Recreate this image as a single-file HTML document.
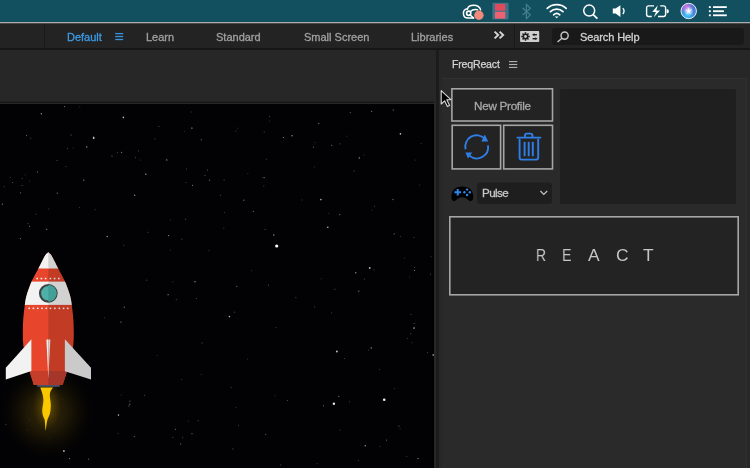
<!DOCTYPE html>
<html><head><meta charset="utf-8">
<style>
*{margin:0;padding:0;box-sizing:border-box}
html,body{width:750px;height:468px;overflow:hidden;background:#262626;font-family:"Liberation Sans",sans-serif}
.a{position:absolute}
.t{position:absolute;white-space:nowrap;line-height:1;-webkit-text-stroke:0.3px currentColor;will-change:transform}
</style></head><body>
<!-- menubar -->
<div class="a" style="left:0;top:0;width:750px;height:22px;background:#13505f"></div>
<div class="a" style="left:0;top:22px;width:750px;height:1px;background:#ababab"></div>
<div class="a" style="left:0;top:23px;width:750px;height:1px;background:#4a4a4a"></div>
<!-- toolbar -->
<div class="a" style="left:0;top:24px;width:750px;height:24px;background:#232323"></div>
<div class="a" style="left:0;top:48px;width:750px;height:2px;background:#161616"></div>
<div class="a" style="left:44px;top:24px;width:1px;height:24px;background:#191919"></div>
<div class="a" style="left:514px;top:24px;width:1px;height:24px;background:#191919"></div>

<div class="t" style="left:67px;top:31.7px;font-size:11px;color:#3d9be6">Default</div>
<div class="t" style="left:146px;top:31.7px;font-size:11px;color:#a0a0a0">Learn</div>
<div class="t" style="left:216px;top:31.7px;font-size:11px;color:#a0a0a0">Standard</div>
<div class="t" style="left:304px;top:31.7px;font-size:11px;color:#a0a0a0">Small Screen</div>
<div class="t" style="left:411px;top:31.7px;font-size:11px;color:#a0a0a0">Libraries</div>
<div class="a" style="left:552px;top:28px;width:192px;height:16.5px;background:#191919;border-radius:3px"></div>
<div class="t" style="left:579.5px;top:31.7px;font-size:11px;color:#d2d2d2;letter-spacing:-0.1px">Search Help</div>

<!-- left comp panel -->
<div class="a" style="left:0;top:50px;width:435px;height:51px;background:#272727"></div>
<div class="a" style="left:0;top:101px;width:435px;height:1px;background:#1f1f1f"></div>
<div class="a" style="left:0;top:102px;width:435px;height:1px;background:#171717"></div>
<div class="a" style="left:0;top:103px;width:435px;height:1px;background:#282828"></div>
<div class="a" style="left:0;top:104px;width:434px;height:364px;background:#020204"></div>
<svg class="a" style="left:0;top:104px" width="434" height="364" viewBox="0 104 434 364">
<defs>
<clipPath id="body"><path d="M48.3,252.5 C48.78,252.92 50.10,253.42 51.20,255.00 C52.30,256.58 53.73,259.75 54.90,262.00 C56.07,264.25 56.55,265.33 58.20,268.50 C59.85,271.67 62.85,276.58 64.80,281.00 C66.75,285.42 68.73,291.00 69.90,295.00 C71.07,299.00 71.22,300.83 71.80,305.00 C72.38,309.17 73.07,315.00 73.40,320.00 C73.73,325.00 73.82,330.83 73.80,335.00 C73.78,339.17 73.68,341.67 73.30,345.00 C72.92,348.33 72.53,350.67 71.50,355.00 C70.47,359.33 68.57,366.00 67.10,371.00 C65.63,376.00 63.43,382.67 62.70,385.00 L33.90,385.00 C33.17,382.67 30.97,376.00 29.50,371.00 C28.03,366.00 26.13,359.33 25.10,355.00 C24.07,350.67 23.68,348.33 23.30,345.00 C22.92,341.67 22.82,339.17 22.80,335.00 C22.78,330.83 22.87,325.00 23.20,320.00 C23.53,315.00 24.22,309.17 24.80,305.00 C25.38,300.83 25.53,299.00 26.70,295.00 C27.87,291.00 29.85,285.42 31.80,281.00 C33.75,276.58 36.75,271.67 38.40,268.50 C40.05,265.33 40.53,264.25 41.70,262.00 C42.87,259.75 44.30,256.58 45.40,255.00 C46.50,253.42 47.82,252.92 48.30,252.50 Z"/></clipPath>
<radialGradient id="glow" cx="50%" cy="50%" r="50%">
<stop offset="0" stop-color="#3a2e08" stop-opacity="1"/><stop offset="0.45" stop-color="#251d06" stop-opacity="0.8"/><stop offset="1" stop-color="#100c02" stop-opacity="0"/>
</radialGradient>
<radialGradient id="glow2" cx="50%" cy="50%" r="50%">
<stop offset="0" stop-color="#8a6a00" stop-opacity="0.7"/><stop offset="1" stop-color="#5a4400" stop-opacity="0"/>
</radialGradient>
</defs>
<g id="stars"><rect x="140.2" y="159.6" width="1" height="1" fill="rgb(48,48,52)"/><rect x="158.3" y="126.0" width="1" height="1" fill="rgb(77,77,81)"/><rect x="93.0" y="136.1" width="1" height="1" fill="rgb(71,71,75)"/><rect x="30.2" y="137.8" width="1" height="1" fill="rgb(72,72,76)"/><rect x="410.2" y="333.3" width="1" height="1" fill="rgb(82,82,86)"/><rect x="410.4" y="313.9" width="1" height="1" fill="rgb(70,70,74)"/><rect x="21.5" y="185.0" width="1" height="1" fill="rgb(80,80,84)"/><rect x="371.7" y="209.8" width="1" height="1" fill="rgb(54,54,58)"/><rect x="234.1" y="311.7" width="1" height="1" fill="rgb(80,80,84)"/><rect x="353.4" y="170.4" width="1" height="1" fill="rgb(82,82,86)"/><rect x="247.3" y="173.0" width="1" height="1" fill="rgb(51,51,55)"/><rect x="237.2" y="127.7" width="1" height="1" fill="rgb(48,48,52)"/><rect x="268.0" y="284.7" width="1" height="1" fill="rgb(79,79,83)"/><rect x="185.1" y="218.7" width="1" height="1" fill="rgb(82,82,86)"/><rect x="399.9" y="235.9" width="1" height="1" fill="rgb(60,60,64)"/><rect x="344.0" y="358.0" width="1" height="1" fill="rgb(60,60,64)"/><rect x="35.4" y="213.7" width="1" height="1" fill="rgb(76,76,80)"/><rect x="378.9" y="369.1" width="1" height="1" fill="rgb(63,63,67)"/><rect x="263.7" y="131.5" width="1" height="1" fill="rgb(77,77,81)"/><rect x="181.0" y="379.1" width="1" height="1" fill="rgb(54,54,58)"/><rect x="404.1" y="257.7" width="1" height="1" fill="rgb(49,49,53)"/><rect x="331.1" y="312.4" width="1" height="1" fill="rgb(65,65,69)"/><rect x="147.3" y="231.8" width="1" height="1" fill="rgb(76,76,80)"/><rect x="251.1" y="270.1" width="1" height="1" fill="rgb(50,50,54)"/><rect x="409.0" y="276.6" width="1" height="1" fill="rgb(49,49,53)"/><rect x="280.2" y="464.5" width="1" height="1" fill="rgb(73,73,77)"/><rect x="123.2" y="244.7" width="1" height="1" fill="rgb(67,67,71)"/><rect x="72.8" y="147.4" width="1" height="1" fill="rgb(48,48,52)"/><rect x="94.5" y="209.1" width="1" height="1" fill="rgb(60,60,64)"/><rect x="172.3" y="436.9" width="1" height="1" fill="rgb(76,76,80)"/><rect x="237.9" y="424.8" width="1" height="1" fill="rgb(72,72,76)"/><rect x="374.1" y="205.8" width="1" height="1" fill="rgb(71,71,75)"/><rect x="427.1" y="352.1" width="1" height="1" fill="rgb(69,69,73)"/><rect x="414.7" y="159.6" width="1" height="1" fill="rgb(56,56,60)"/><rect x="79.0" y="207.1" width="1" height="1" fill="rgb(54,54,58)"/><rect x="181.4" y="238.7" width="1" height="1" fill="rgb(81,81,85)"/><rect x="138.0" y="150.4" width="1" height="1" fill="rgb(77,77,81)"/><rect x="411.4" y="342.1" width="1" height="1" fill="rgb(48,48,52)"/><rect x="197.7" y="420.3" width="1" height="1" fill="rgb(80,80,84)"/><rect x="169.9" y="249.4" width="1" height="1" fill="rgb(51,51,55)"/><rect x="208.5" y="250.0" width="1" height="1" fill="rgb(57,57,61)"/><rect x="29.2" y="180.6" width="1" height="1" fill="rgb(55,55,59)"/><rect x="232.4" y="448.5" width="1" height="1" fill="rgb(84,84,88)"/><rect x="265.9" y="158.8" width="1" height="1" fill="rgb(61,61,65)"/><rect x="413.7" y="323.0" width="1" height="1" fill="rgb(75,75,79)"/><rect x="430.0" y="273.7" width="1" height="1" fill="rgb(75,75,79)"/><rect x="135.0" y="157.2" width="1" height="1" fill="rgb(66,66,70)"/><rect x="320.6" y="278.3" width="1" height="1" fill="rgb(55,55,59)"/><rect x="223.6" y="179.3" width="1" height="1" fill="rgb(78,78,82)"/><rect x="156.6" y="354.8" width="1" height="1" fill="rgb(46,46,50)"/><rect x="328.3" y="212.9" width="1" height="1" fill="rgb(50,50,54)"/><rect x="301.5" y="199.5" width="1" height="1" fill="rgb(68,68,72)"/><rect x="393.3" y="233.8" width="1" height="1" fill="rgb(59,59,63)"/><rect x="230.6" y="387.0" width="1" height="1" fill="rgb(66,66,70)"/><rect x="275.6" y="327.0" width="1" height="1" fill="rgb(57,57,61)"/><rect x="349.0" y="401.2" width="1" height="1" fill="rgb(59,59,63)"/><rect x="316.5" y="463.2" width="1" height="1" fill="rgb(62,62,66)"/><rect x="204.5" y="175.1" width="1" height="1" fill="rgb(83,83,87)"/><rect x="414.2" y="266.9" width="1" height="1" fill="rgb(67,67,71)"/><rect x="413.5" y="237.0" width="1" height="1" fill="rgb(59,59,63)"/><rect x="146.2" y="279.7" width="1" height="1" fill="rgb(84,84,88)"/><rect x="363.9" y="278.6" width="1" height="1" fill="rgb(67,67,71)"/><rect x="346.2" y="135.7" width="1" height="1" fill="rgb(52,52,56)"/><rect x="393.9" y="388.2" width="1" height="1" fill="rgb(57,57,61)"/><rect x="207.0" y="169.6" width="1" height="1" fill="rgb(85,85,89)"/><rect x="144.0" y="394.9" width="1" height="1" fill="rgb(70,70,74)"/><rect x="200.5" y="374.1" width="1" height="1" fill="rgb(50,50,54)"/><rect x="313.8" y="166.5" width="1" height="1" fill="rgb(53,53,57)"/><rect x="201.5" y="342.4" width="1" height="1" fill="rgb(84,84,88)"/><rect x="357.9" y="459.9" width="1" height="1" fill="rgb(67,67,71)"/><rect x="314.5" y="142.2" width="1" height="1" fill="rgb(53,53,57)"/><rect x="187.8" y="420.6" width="1" height="1" fill="rgb(58,58,62)"/><rect x="12.1" y="182.0" width="1" height="1" fill="rgb(77,77,81)"/><rect x="104.2" y="317.3" width="1" height="1" fill="rgb(61,61,65)"/><rect x="235.7" y="407.0" width="1" height="1" fill="rgb(48,48,52)"/><rect x="394.0" y="233.1" width="1" height="1" fill="rgb(74,74,78)"/><rect x="286.9" y="400.0" width="1" height="1" fill="rgb(78,78,82)"/><rect x="182.1" y="437.2" width="1" height="1" fill="rgb(77,77,81)"/><rect x="56.6" y="160.0" width="1" height="1" fill="rgb(77,77,81)"/><rect x="79.3" y="106.4" width="1" height="1" fill="rgb(54,54,58)"/><rect x="314.0" y="306.4" width="1" height="1" fill="rgb(65,65,69)"/><rect x="295.4" y="297.1" width="1" height="1" fill="rgb(75,75,79)"/><rect x="339.6" y="143.4" width="1" height="1" fill="rgb(80,80,84)"/><rect x="24.6" y="174.3" width="1" height="1" fill="rgb(47,47,51)"/><rect x="334.4" y="288.8" width="1" height="1" fill="rgb(80,80,84)"/><rect x="27.4" y="222.9" width="1" height="1" fill="rgb(77,77,81)"/><rect x="262.5" y="177.2" width="1" height="1" fill="rgb(62,62,66)"/><rect x="195.9" y="298.0" width="1" height="1" fill="rgb(75,75,79)"/><rect x="219.9" y="194.7" width="1" height="1" fill="rgb(78,78,82)"/><rect x="379.5" y="446.1" width="1" height="1" fill="rgb(61,61,65)"/><rect x="399.6" y="428.2" width="1" height="1" fill="rgb(57,57,61)"/><rect x="363.7" y="154.6" width="1" height="1" fill="rgb(52,52,56)"/><rect x="169.9" y="219.4" width="1" height="1" fill="rgb(60,60,64)"/><rect x="185.5" y="182.0" width="1" height="1" fill="rgb(64,64,68)"/><rect x="339.4" y="429.7" width="1" height="1" fill="rgb(54,54,58)"/><rect x="406.8" y="337.9" width="1" height="1" fill="rgb(68,68,72)"/><rect x="418.9" y="184.5" width="1" height="1" fill="rgb(51,51,55)"/><rect x="172.4" y="281.4" width="1" height="1" fill="rgb(59,59,63)"/><rect x="223.3" y="227.8" width="1" height="1" fill="rgb(57,57,61)"/><rect x="154.4" y="138.4" width="1" height="1" fill="rgb(68,68,72)"/><rect x="190.7" y="111.5" width="1" height="1" fill="rgb(66,66,70)"/><rect x="224.0" y="212.0" width="1" height="1" fill="rgb(49,49,53)"/><rect x="48.9" y="437.5" width="1" height="1" fill="rgb(59,59,63)"/><rect x="420.7" y="142.9" width="1" height="1" fill="rgb(61,61,65)"/><rect x="117.7" y="432.9" width="1" height="1" fill="rgb(56,56,60)"/><rect x="117.1" y="151.9" width="1" height="1" fill="rgb(72,72,76)"/><rect x="367.9" y="349.7" width="1" height="1" fill="rgb(61,61,65)"/><rect x="175.8" y="299.2" width="1" height="1" fill="rgb(77,77,81)"/><rect x="247.1" y="358.6" width="1" height="1" fill="rgb(50,50,54)"/><rect x="120.8" y="394.5" width="1" height="1" fill="rgb(56,56,60)"/><rect x="184.2" y="131.2" width="1" height="1" fill="rgb(46,46,50)"/><rect x="274.7" y="395.2" width="1" height="1" fill="rgb(50,50,54)"/><rect x="263.3" y="185.5" width="1" height="1" fill="rgb(61,61,65)"/><rect x="373.6" y="269.3" width="1" height="1" fill="rgb(66,66,70)"/><rect x="430.5" y="256.2" width="1" height="1" fill="rgb(62,62,66)"/><rect x="269.2" y="120.6" width="1" height="1" fill="rgb(60,60,64)"/><rect x="406.2" y="455.9" width="1" height="1" fill="rgb(61,61,65)"/><rect x="21.8" y="178.0" width="1" height="1" fill="rgb(64,64,68)"/><circle cx="41.3" cy="113.8" r="0.7" fill="rgb(150,150,150)"/><circle cx="64.4" cy="106.6" r="0.6" fill="rgb(120,120,120)"/><circle cx="123.4" cy="117.4" r="0.8" fill="rgb(190,190,190)"/><circle cx="93.7" cy="138" r="0.9" fill="rgb(220,220,220)"/><circle cx="86.8" cy="147" r="0.7" fill="rgb(150,150,150)"/><circle cx="71" cy="135" r="0.6" fill="rgb(110,110,110)"/><circle cx="26.6" cy="135.6" r="0.6" fill="rgb(110,110,110)"/><circle cx="191.9" cy="128.1" r="0.7" fill="rgb(170,170,170)"/><circle cx="201.2" cy="139.8" r="0.6" fill="rgb(120,120,120)"/><circle cx="112" cy="156" r="0.6" fill="rgb(130,130,130)"/><circle cx="121.6" cy="152.4" r="0.6" fill="rgb(120,120,120)"/><circle cx="166.8" cy="159.9" r="0.7" fill="rgb(150,150,150)"/><circle cx="145.8" cy="174.3" r="0.7" fill="rgb(160,160,160)"/><circle cx="83.8" cy="180.2" r="0.6" fill="rgb(140,140,140)"/><circle cx="37.4" cy="171.9" r="0.6" fill="rgb(110,110,110)"/><circle cx="134.7" cy="195.2" r="0.7" fill="rgb(150,150,150)"/><circle cx="57.2" cy="193.1" r="0.6" fill="rgb(140,140,140)"/><circle cx="192.5" cy="185.3" r="0.6" fill="rgb(130,130,130)"/><circle cx="209.6" cy="180.2" r="0.6" fill="rgb(110,110,110)"/><circle cx="2.4" cy="204.2" r="0.6" fill="rgb(120,120,120)"/><circle cx="20.4" cy="192.8" r="0.6" fill="rgb(110,110,110)"/><circle cx="46.7" cy="229.3" r="0.6" fill="rgb(140,140,140)"/><circle cx="29.6" cy="226.3" r="0.6" fill="rgb(110,110,110)"/><circle cx="107.2" cy="236.5" r="0.7" fill="rgb(160,160,160)"/><circle cx="168.6" cy="235.6" r="0.6" fill="rgb(140,140,140)"/><circle cx="20.4" cy="238.6" r="0.6" fill="rgb(120,120,120)"/><circle cx="65.9" cy="166.5" r="0.5" fill="rgb(90,90,90)"/><circle cx="67.4" cy="148.5" r="0.5" fill="rgb(90,90,90)"/><circle cx="186.5" cy="168.9" r="0.5" fill="rgb(90,90,90)"/><circle cx="48.8" cy="209" r="0.5" fill="rgb(90,90,90)"/><circle cx="4.2" cy="186.8" r="0.5" fill="rgb(90,90,90)"/><circle cx="10.2" cy="177.2" r="0.5" fill="rgb(80,80,80)"/><circle cx="400.4" cy="133.9" r="0.8" fill="rgb(200,200,200)"/><circle cx="359.3" cy="157.9" r="0.7" fill="rgb(160,160,160)"/><circle cx="320.9" cy="199.6" r="0.8" fill="rgb(180,180,180)"/><circle cx="327.8" cy="227.2" r="0.8" fill="rgb(180,180,180)"/><circle cx="339.8" cy="214.6" r="0.6" fill="rgb(130,130,130)"/><circle cx="273.8" cy="235" r="0.7" fill="rgb(150,150,150)"/><circle cx="283.4" cy="137.5" r="0.6" fill="rgb(140,140,140)"/><circle cx="292.1" cy="135.7" r="0.7" fill="rgb(150,150,150)"/><circle cx="318.8" cy="123.4" r="0.6" fill="rgb(120,120,120)"/><circle cx="264.2" cy="177.7" r="0.6" fill="rgb(120,120,120)"/><circle cx="243.8" cy="200.2" r="0.6" fill="rgb(130,130,130)"/><circle cx="253.4" cy="211.3" r="0.6" fill="rgb(110,110,110)"/><circle cx="392.9" cy="199.6" r="0.6" fill="rgb(130,130,130)"/><circle cx="331.7" cy="145.3" r="0.6" fill="rgb(110,110,110)"/><circle cx="313.4" cy="147.1" r="0.6" fill="rgb(110,110,110)"/><circle cx="393.2" cy="109.9" r="0.6" fill="rgb(110,110,110)"/><circle cx="371.6" cy="111.4" r="0.6" fill="rgb(110,110,110)"/><circle cx="350.3" cy="112.6" r="0.6" fill="rgb(100,100,100)"/><circle cx="269.6" cy="116.5" r="0.5" fill="rgb(90,90,90)"/><circle cx="236" cy="130.9" r="0.5" fill="rgb(90,90,90)"/><circle cx="265.1" cy="229.6" r="0.5" fill="rgb(100,100,100)"/><circle cx="276.7" cy="246" r="1.6" fill="rgb(255,255,255)"/><circle cx="384.2" cy="399.8" r="1.3" fill="rgb(240,240,240)"/><circle cx="333.9" cy="403.7" r="1.2" fill="rgb(230,230,230)"/><circle cx="336.9" cy="351.5" r="0.9" fill="rgb(200,200,200)"/><circle cx="369.7" cy="267.9" r="0.9" fill="rgb(190,190,190)"/><circle cx="355.8" cy="272.8" r="0.7" fill="rgb(150,150,150)"/><circle cx="229.4" cy="316.6" r="0.8" fill="rgb(180,180,180)"/><circle cx="414" cy="328.1" r="0.8" fill="rgb(170,170,170)"/><circle cx="371.2" cy="348" r="0.7" fill="rgb(150,150,150)"/><circle cx="195" cy="281.8" r="0.7" fill="rgb(150,150,150)"/><circle cx="168.1" cy="294.7" r="0.6" fill="rgb(140,140,140)"/><circle cx="120.9" cy="322.1" r="0.6" fill="rgb(140,140,140)"/><circle cx="433.2" cy="355" r="0.8" fill="rgb(200,200,200)"/><circle cx="236.8" cy="286.3" r="0.6" fill="rgb(120,120,120)"/><circle cx="358.8" cy="291.2" r="0.6" fill="rgb(130,130,130)"/><circle cx="414.5" cy="270.3" r="0.6" fill="rgb(130,130,130)"/><circle cx="124.3" cy="307.2" r="0.6" fill="rgb(120,120,120)"/><circle cx="118.4" cy="414.7" r="0.6" fill="rgb(130,130,130)"/><circle cx="129.8" cy="404.2" r="0.6" fill="rgb(120,120,120)"/><circle cx="118.5" cy="415.2" r="0.7" fill="rgb(160,160,160)"/><circle cx="63.9" cy="451" r="0.9" fill="rgb(200,200,200)"/><circle cx="129.9" cy="401.1" r="0.6" fill="rgb(120,120,120)"/><circle cx="129" cy="405.8" r="0.6" fill="rgb(110,110,110)"/><circle cx="29.3" cy="420.2" r="0.6" fill="rgb(110,110,110)"/><circle cx="5.9" cy="424.6" r="0.5" fill="rgb(90,90,90)"/><circle cx="69.5" cy="458.6" r="0.6" fill="rgb(130,130,130)"/><circle cx="134.3" cy="436.6" r="0.6" fill="rgb(110,110,110)"/><circle cx="175.4" cy="429.3" r="0.6" fill="rgb(110,110,110)"/><circle cx="180.6" cy="443.9" r="0.6" fill="rgb(100,100,100)"/><circle cx="192" cy="433.7" r="0.6" fill="rgb(110,110,110)"/><circle cx="88.6" cy="459.2" r="0.6" fill="rgb(100,100,100)"/><circle cx="27" cy="429.9" r="0.5" fill="rgb(90,90,90)"/><circle cx="61.9" cy="398.8" r="0.6" fill="rgb(100,100,100)"/><circle cx="365.2" cy="445.7" r="0.7" fill="rgb(160,160,160)"/><circle cx="418" cy="458.6" r="0.7" fill="rgb(150,150,150)"/><circle cx="323.5" cy="405.8" r="0.6" fill="rgb(120,120,120)"/><circle cx="338.8" cy="396.4" r="0.6" fill="rgb(110,110,110)"/><circle cx="398.9" cy="426" r="0.6" fill="rgb(110,110,110)"/><circle cx="265.7" cy="434.3" r="0.6" fill="rgb(100,100,100)"/><circle cx="386.6" cy="440.1" r="0.6" fill="rgb(110,110,110)"/></g>
<ellipse cx="47" cy="412" rx="46" ry="46" fill="url(#glow)"/>
<ellipse cx="47" cy="405" rx="14" ry="26" fill="url(#glow2)"/>
<g clip-path="url(#body)">
<rect x="0" y="250" width="49" height="140" fill="#e8462c"/>
<rect x="48.3" y="250" width="50" height="140" fill="#c23b25"/>
<rect x="0" y="250" width="49" height="18.5" fill="#f2f2f2"/>
<rect x="48.3" y="250" width="50" height="18.5" fill="#d2d2d2"/>
<rect x="0" y="281.6" width="49" height="23.3" fill="#f2f2f2"/>
<rect x="48.3" y="281.6" width="50" height="23.3" fill="#d2d2d2"/>
<rect x="0" y="371" width="49" height="20" fill="#c43e2a"/>
<rect x="48.3" y="371" width="50" height="20" fill="#a6362a"/>
</g>
<g fill="#f4f4f4">
<rect x="36.4" y="277.8" width="1.6" height="1.5"/><rect x="40.6" y="277.8" width="1.6" height="1.5"/><rect x="44.8" y="277.8" width="1.6" height="1.5"/>
<rect x="49.6" y="277.8" width="1.6" height="1.5" fill="#dcdcdc"/><rect x="53.8" y="277.8" width="1.6" height="1.5" fill="#dcdcdc"/><rect x="58" y="277.8" width="1.6" height="1.5" fill="#dcdcdc"/>
</g>
<g fill="#f4f4f4">
<rect x="28.4" y="307.6" width="1.6" height="1.5"/><rect x="32.6" y="307.6" width="1.6" height="1.5"/><rect x="36.9" y="307.6" width="1.6" height="1.5"/><rect x="41.2" y="307.6" width="1.6" height="1.5"/><rect x="45.5" y="307.6" width="1.6" height="1.5"/>
</g>
<g fill="#dcdcdc">
<rect x="49.6" y="307.6" width="1.6" height="1.5"/><rect x="54" y="307.6" width="1.6" height="1.5"/><rect x="58.5" y="307.6" width="1.6" height="1.5"/><rect x="62.8" y="307.6" width="1.6" height="1.5"/><rect x="66.9" y="307.6" width="1.6" height="1.5"/>
</g>
<circle cx="48.3" cy="293.3" r="8.3" fill="#4db1a9" stroke="#3f4343" stroke-width="2.2"/>
<path d="M48.3,284.9 A8.3,8.3 0 0 1 48.3,301.7 Z" fill="#41a196"/>
<!-- wings -->
<polygon points="31.4,339.2 5.8,367.8 5.8,379.4 31.4,371" fill="#f2f2f2"/>
<polygon points="64.9,339.2 91,367.8 91,379.4 64.9,371.3" fill="#cacaca"/>
<polygon points="46.4,339.4 48.3,339.4 48.3,378.5" fill="#f2f2f2"/>
<polygon points="48.3,339.4 50.4,339.4 48.3,378.5" fill="#cfcfcf"/>
<!-- nozzle -->
<rect x="37.2" y="385" width="22.5" height="1.8" fill="#4a5366"/>
<!-- flame -->
<path d="M40.2,387.6 L53,387.6 C51.6,389.4 50,391.4 49.8,394.6 C49.6,398 50.8,401 50.8,405 C50.8,410 50.2,413.6 48.8,416.4 C47.4,419 46.8,422 46.4,425.4 L45.6,431 C45.2,427 45.2,423 44.6,419.6 C43.6,417.4 42.2,414.6 42.2,410.6 C42.2,406.6 43.6,403.6 43.4,399.4 C43.2,395.6 41.8,391.6 40.2,387.6 Z" fill="#fac800"/>
</svg>
<div class="a" style="left:434px;top:50px;width:2px;height:418px;background:#272727"></div>
<div class="a" style="left:436px;top:50px;width:3.5px;height:418px;background:#1c1c1c"></div>

<!-- right panel -->
<div class="a" style="left:439px;top:50px;width:311px;height:418px;background:#272727"></div>
<div class="a" style="left:442px;top:78px;width:305px;height:390px;background:#2a2a2a;border-top:1px solid #303030;border-right:1px solid #303030"></div>
<div class="t" style="left:452px;top:59.1px;font-size:10.6px;color:#d4d4d4;-webkit-text-stroke:0.25px currentColor;letter-spacing:-0.2px">FreqReact</div>

<!-- buttons -->
<svg class="a" style="left:0;top:0" width="750" height="468" viewBox="0 0 750 468">
<g fill="#232323" stroke="#a6a6a6" stroke-width="1.6">
<rect x="451.9" y="88.8" width="100.6" height="32.2"/>
<rect x="452.2" y="125.3" width="48.4" height="43.6"/>
<rect x="503.7" y="125.3" width="48.8" height="43.6"/>
<rect x="449.8" y="216.8" width="288.4" height="78"/>
</g>
<rect x="560" y="89" width="176" height="115" rx="2" fill="#1f1f1f"/>
<rect x="477" y="182.5" width="75" height="21.5" rx="3" fill="#1e1e1e"/>
</svg>
<div class="t" style="left:473.5px;top:100.4px;font-size:11.7px;color:#a8a8a8;letter-spacing:-0.28px">New Profile</div>
<div class="t" style="left:482.3px;top:187.4px;font-size:11.6px;color:#c8c8c8;letter-spacing:-0.55px">Pulse</div>
<div class="t" style="left:535.8px;top:246.6px;font-size:17.4px;color:#c6c6c6;-webkit-text-stroke:0;transform:scaleX(0.8);transform-origin:0 0">R</div>
<div class="t" style="left:562.4px;top:246.6px;font-size:17.4px;color:#c6c6c6;-webkit-text-stroke:0;transform:scaleX(0.82);transform-origin:0 0">E</div>
<div class="t" style="left:587.5px;top:246.6px;font-size:17.4px;color:#c6c6c6;-webkit-text-stroke:0">A</div>
<div class="t" style="left:616px;top:246.6px;font-size:17.4px;color:#c6c6c6;-webkit-text-stroke:0">C</div>
<div class="t" style="left:643px;top:246.6px;font-size:17.4px;color:#c6c6c6;-webkit-text-stroke:0">T</div>

<svg class="a" style="left:0;top:0" width="750" height="468" viewBox="0 0 750 468">
<!-- toolbar hamburger -->
<g stroke="#3a92e2" stroke-width="1.3">
<line x1="115.2" y1="33.6" x2="123.2" y2="33.6"/><line x1="115.2" y1="36.5" x2="123.2" y2="36.5"/><line x1="115.2" y1="39.5" x2="123.2" y2="39.5"/>
</g>
<!-- >> -->
<g fill="none" stroke="#d6d6d6" stroke-width="1.9" stroke-linejoin="miter">
<polyline points="494.6,31.6 498.2,35 494.6,38.4"/><polyline points="499.6,31.6 503.2,35 499.6,38.4"/>
</g>
<!-- workspace icon -->
<rect x="520.1" y="30.9" width="19.1" height="11.1" rx="0.8" fill="#cfcfcf"/>
<polygon points="524.73,33.60 524.77,32.26 526.23,32.26 526.27,33.60 527.00,33.90 527.98,32.99 529.01,34.02 528.10,35.00 528.40,35.73 529.74,35.77 529.74,37.23 528.40,37.27 528.10,38.00 529.01,38.98 527.98,40.01 527.00,39.10 526.27,39.40 526.23,40.74 524.77,40.74 524.73,39.40 524.00,39.10 523.02,40.01 521.99,38.98 522.90,38.00 522.60,37.27 521.26,37.23 521.26,35.77 522.60,35.73 522.90,35.00 521.99,34.02 523.02,32.99 524.00,33.90" fill="#1e1e1e"/>
<circle cx="525.5" cy="36.5" r="1.4" fill="#cfcfcf"/>
<g fill="#1e1e1e">
<path d="M532,34.7 L534.4,33.2 V36.2 Z"/><rect x="534" y="34" width="2.9" height="1.4"/>
<path d="M537.6,38.7 L535.2,37.2 V40.2 Z"/><rect x="532.6" y="38" width="2.9" height="1.4"/>
</g>
<!-- search magnifier -->
<g fill="none" stroke="#c8c8c8" stroke-width="1.4"><circle cx="564.6" cy="35.6" r="3.6"/><line x1="562" y1="38.2" x2="557.5" y2="42"/></g>
<!-- menubar icons -->
<g fill="none" stroke="#ffffff" stroke-width="1.5" stroke-linecap="round">
<path d="M473.6,18.1 H467.8 A4.7,4.7 0 0 1 467.2,8.8"/>
<path d="M467.4,9.2 C468.6,4.2 478.6,3.6 480.6,9.8"/>
<circle cx="468.7" cy="13.3" r="2.1" stroke-width="1.7"/>
<path d="M470.3,11.6 C472.2,9.8 474.6,9.2 477.4,9.8"/>
<path d="M469.9,14.8 L473.4,17.9"/>
</g>
<circle cx="478.9" cy="15.25" r="4.7" fill="#f2897a"/>
<rect x="492.4" y="2.8" width="16.2" height="16.6" fill="#3f7188"/>
<rect x="495" y="3.8" width="10.3" height="6.8" fill="#df4b5c"/>
<rect x="495" y="11.8" width="10.3" height="6.8" fill="#f0616f"/>
<path d="M522.6,8 L530.4,14.8 L526.4,18.6 V4.4 L530.4,8.2 L522.6,15" fill="none" stroke="#437f8f" stroke-width="1.2"/>
<!-- wifi -->
<g fill="none" stroke="#fff" stroke-width="1.7" stroke-linecap="round">
<path d="M547.2,8.4 A14,14 0 0 1 566.2,8.4"/>
<path d="M550.4,11.6 A9.4,9.4 0 0 1 563,11.6"/>
<path d="M553.6,14.8 A4.8,4.8 0 0 1 559.8,14.8"/>
</g>
<path d="M554.8,16.4 L556.7,18.2 L558.6,16.4 Z" fill="#fff"/>
<!-- spotlight -->
<g fill="none" stroke="#fff" stroke-width="1.5"><circle cx="589.2" cy="10.6" r="5.5"/><line x1="593.2" y1="14.6" x2="597.4" y2="18.6" stroke-width="1.7"/></g>
<!-- speaker -->
<path d="M612.8,8.6 H615.6 L620.4,5.2 V17 L615.6,13.6 H612.8 Z" fill="#fff"/>
<path d="M622.8,8.2 A4,4 0 0 1 622.8,14" fill="none" stroke="#fff" stroke-width="1.4"/>
<!-- battery -->
<g fill="none" stroke="#fff" stroke-width="1.4">
<path d="M654,5.9 H648.4 A2,2 0 0 0 646.6,7.8 V14.6 A2,2 0 0 0 648.4,16.5 H651.8"/>
<path d="M660.2,5.9 H663.8 A2,2 0 0 1 665.6,7.8 V14.6 A2,2 0 0 1 663.8,16.5 H658"/>
</g>
<path d="M666.6,9.3 H667.4 A1.4,2 0 0 1 667.4,13.3 H666.6 Z" fill="#fff"/>
<path d="M657.8,5.2 L652.2,12 H655.9 L653.8,17.2 L660,10.4 H656.3 Z" fill="#fff"/>
<!-- siri -->
<defs>
<radialGradient id="sr1" cx="0.4" cy="0.78" r="0.55"><stop offset="0" stop-color="#38c8f8"/><stop offset="1" stop-color="#38c8f8" stop-opacity="0"/></radialGradient>
<radialGradient id="sr2" cx="0.35" cy="0.22" r="0.45"><stop offset="0" stop-color="#d070e0"/><stop offset="1" stop-color="#d070e0" stop-opacity="0"/></radialGradient>
<radialGradient id="sr3" cx="0.5" cy="0.5" r="0.32"><stop offset="0" stop-color="#ffffff"/><stop offset="1" stop-color="#ffffff" stop-opacity="0"/></radialGradient>
</defs>
<circle cx="688.7" cy="11" r="7.8" fill="#4a78d8"/>
<circle cx="688.7" cy="11" r="7.8" fill="url(#sr1)"/>
<circle cx="688.7" cy="11" r="7.8" fill="url(#sr2)"/>
<circle cx="688.7" cy="11" r="7.8" fill="url(#sr3)"/>
<path d="M688.7,7 L689.4,10.2 L692.4,9 L689.6,11.4 L691,14.6 L688.6,12.2 L686.2,14.2 L687.8,11.2 L685,10 L688,10.2 Z" fill="#ffffff" opacity="0.8"/>
<circle cx="688.7" cy="11" r="7.7" fill="none" stroke="#e4ecf0" stroke-width="1"/>
<!-- notification list -->
<g fill="#fff">
<rect x="708.9" y="6.2" width="1.9" height="1.8"/><rect x="708.9" y="10.3" width="1.9" height="1.8"/><rect x="708.9" y="14.4" width="1.9" height="1.8"/>
<rect x="713" y="6.2" width="13.8" height="1.8"/><rect x="713" y="10.3" width="10.9" height="1.8"/><rect x="713" y="14.4" width="13.8" height="1.8"/>
</g>
<!-- FreqReact hamburger -->
<g stroke="#b4b4b4" stroke-width="1.1">
<line x1="509" y1="61.6" x2="517.3" y2="61.6"/><line x1="509" y1="64.5" x2="517.3" y2="64.5"/><line x1="509" y1="67.4" x2="517.3" y2="67.4"/>
</g>
<!-- refresh -->
<g fill="none" stroke="#2f7fe8" stroke-width="1.9">
<path d="M465.6,149.2 A11.3,11.3 0 0 1 484.6,138.6"/>
<path d="M488,145.4 A11.3,11.3 0 0 1 469.4,155.6"/>
</g>
<path d="M484.8,134.6 L488.2,141.4 L481.4,141.4 Z" fill="#2f7fe8"/>
<path d="M465.4,152.6 L472.2,152.6 L468,158.6 Z" fill="#2f7fe8"/>
<!-- trash -->
<g fill="none" stroke="#2f7fe8" stroke-width="1.9" stroke-linecap="round">
<line x1="517.4" y1="137.6" x2="540.4" y2="137.6"/>
<path d="M525,137 V135.4 A1.8,1.8 0 0 1 526.8,133.6 H530.6 A1.8,1.8 0 0 1 532.4,135.4 V137"/>
<path d="M519.6,139.4 V157.6 A2,2 0 0 0 521.6,159.6 H536.2 A2,2 0 0 0 538.2,157.6 V139.4"/>
<line x1="524.6" y1="142.6" x2="524.6" y2="155.4"/><line x1="528.7" y1="142.6" x2="528.7" y2="155.4"/><line x1="532.8" y1="142.6" x2="532.8" y2="155.4"/>
</g>
<!-- gamepad -->
<path d="M451.4,197 C451.4,190.4 455,186.4 462.3,186.4 C469.6,186.4 473.2,190.4 473.2,197 C473.2,199.6 472.2,201 470.6,201 C468.4,201 467,197.2 462.3,197.2 C457.6,197.2 456.2,201 454,201 C452.4,201 451.4,199.6 451.4,197 Z" fill="#000"/>
<g fill="#2b86f0">
<path d="M456.7,189 H458.7 V191.3 H461 V193.3 H458.7 V195.6 H456.7 V193.3 H454.4 V191.3 H456.7 Z"/>
<circle cx="467.1" cy="189.6" r="1.2"/><circle cx="467.1" cy="195" r="1.2"/><circle cx="464.4" cy="192.3" r="1.2"/><circle cx="469.8" cy="192.3" r="1.2"/>
</g>
<!-- chevron -->
<polyline points="540.4,191 543.8,194.4 547.2,191" fill="none" stroke="#c0c0c0" stroke-width="1.3"/>
<!-- cursor -->
<path d="M441.2,90.6 L441.2,104 L444.6,100.8 L447.4,106.6 L449.6,105.6 L446.8,99.8 L451.2,99.8 Z" fill="#000" stroke="#d8d8d8" stroke-width="1.1" stroke-linejoin="round"/>

</svg>
</body></html>
